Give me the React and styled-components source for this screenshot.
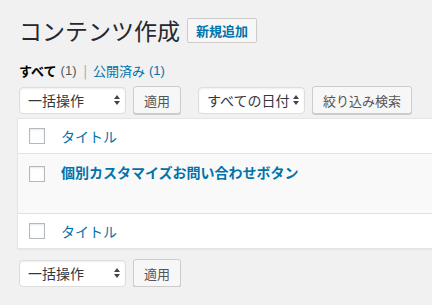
import React from "react";
import styled, { createGlobalStyle } from "styled-components";

const GlobalStyle = createGlobalStyle`
  html, body {
    margin: 0;
    padding: 0;
    background: #f1f1f1;
    overflow: hidden;
  }
  body {
    font-family: "Noto Sans CJK JP", "Liberation Sans", sans-serif;
    color: #444;
  }
`;

const Wrap = styled.div`
  width: 520px;
  padding: 16px 0 0 17px;
`;

const Header = styled.div`
  display: flex;
  align-items: center;
  gap: 7px;
  height: 29px;
  padding-left: 2px;
`;

const Title = styled.h1`
  margin: 0;
  font-size: 23px;
  font-weight: 400;
  line-height: 29px;
  color: #23282d;
`;

const AddNew = styled.a`
  display: inline-flex;
  align-items: center;
  box-sizing: border-box;
  height: 25px;
  padding: 0 8px;
  border: 1px solid #ccc;
  border-radius: 2px;
  background: #f7f7f7;
  color: #0073aa;
  font-size: 13px;
  font-weight: 700;
  text-decoration: none;
`;

const Views = styled.div`
  display: flex;
  align-items: center;
  margin-top: 15px;
  padding-left: 2px;
  height: 20px;
  font-size: 13px;
  color: #555;
`;

const ViewLink = styled.span`
  color: ${(p) => (p.$current ? "#000" : "#0073aa")};
  font-weight: ${(p) => (p.$current ? 700 : 400)};
`;

const Count = styled.span`
  color: ${(p) => (p.$link ? "#0073aa" : "#555")};
  margin-left: 4px;
  font-family: "Liberation Sans", sans-serif;
`;

const Sep = styled.span`
  color: #8aa4b8;
  margin: 0 6px 0 7px;
`;

const TableNav = styled.div`
  display: flex;
  align-items: center;
  height: 28px;
  padding-left: 2px;
  margin-top: ${(p) => p.$top}px;
`;

const Select = styled.div`
  display: flex;
  align-items: center;
  justify-content: space-between;
  box-sizing: border-box;
  width: 107px;
  height: 27px;
  padding: 0 5px 0 8px;
  border: 1px solid #ddd;
  border-radius: 4px;
  background: #fff;
  box-shadow: inset 0 1px 2px rgba(0, 0, 0, 0.07);
  font-size: 14px;
  color: #32373c;
`;

const Button = styled.div`
  display: inline-flex;
  align-items: center;
  box-sizing: border-box;
  height: 28px;
  margin-left: ${(p) => p.$gap}px;
  padding: 0 10px;
  border: 1px solid #ccc;
  border-radius: 3px;
  background: #f7f7f7;
  box-shadow: 0 1px 0 #ccc;
  font-size: 13px;
  color: #555;
`;

const Spacer = styled.div`
  width: ${(p) => p.$w}px;
`;

const Table = styled.div`
  margin-top: 4px;
  border: 1px solid #e5e5e5;
  background: #fff;
  box-shadow: 0 1px 1px rgba(0, 0, 0, 0.04);
`;

const Row = styled.div`
  display: flex;
  align-items: ${(p) => (p.$tall ? "flex-start" : "center")};
  box-sizing: border-box;
  height: ${(p) => p.$h}px;
  padding-top: ${(p) => (p.$tall ? 9 : 0)}px;
  background: ${(p) => (p.$alt ? "#f9f9f9" : "#fff")};
  border-bottom: ${(p) => (p.$line ? "1px solid #e1e1e1" : "none")};
`;

const CheckCell = styled.div`
  display: flex;
  width: 43px;
  padding-left: 11px;
  box-sizing: border-box;
  padding-top: ${(p) => (p.$tall ? 3 : 0)}px;
`;

const Checkbox = styled.span`
  display: block;
  box-sizing: border-box;
  width: 16px;
  height: 16px;
  border: 1px solid #b4b9be;
  background: #fff;
  box-shadow: inset 0 1px 2px rgba(0, 0, 0, 0.1);
`;

const ColLink = styled.a`
  color: #0073aa;
  font-size: 14px;
  line-height: 19px;
  font-weight: ${(p) => (p.$bold ? 700 : 400)};
  text-decoration: none;
`;

const Arrows = () => (
  <svg width="6" height="10" viewBox="0 0 6 10">
    <path d="M3 0 L6 4 L0 4 Z" fill="#444" />
    <path d="M0 6 L6 6 L3 10 Z" fill="#444" />
  </svg>
);

const BulkNav = ({ top }) => (
  <TableNav $top={top}>
    <Select>
      一括操作
      <Arrows />
    </Select>
    <Button $gap={7}>適用</Button>
  </TableNav>
);

export default function App() {
  return (
    <>
      <GlobalStyle />
      <Wrap>
        <Header>
          <Title>コンテンツ作成</Title>
          <AddNew>新規追加</AddNew>
        </Header>

        <Views>
          <ViewLink $current>すべて</ViewLink>
          <Count>(1)</Count>
          <Sep>|</Sep>
          <ViewLink>公開済み</ViewLink>
          <Count $link>(1)</Count>
        </Views>

        <TableNav $top={6}>
          <Select>
            一括操作
            <Arrows />
          </Select>
          <Button $gap={7}>適用</Button>
          <Spacer $w={17} />
          <Select>
            すべての日付
            <Arrows />
          </Select>
          <Button $gap={7}>絞り込み検索</Button>
        </TableNav>

        <Table>
          <Row $h={35} $line>
            <CheckCell>
              <Checkbox />
            </CheckCell>
            <ColLink>タイトル</ColLink>
          </Row>
          <Row $h={60} $alt $line $tall>
            <CheckCell $tall>
              <Checkbox />
            </CheckCell>
            <ColLink $bold>個別カスタマイズお問い合わせボタン</ColLink>
          </Row>
          <Row $h={34}>
            <CheckCell>
              <Checkbox />
            </CheckCell>
            <ColLink>タイトル</ColLink>
          </Row>
        </Table>

        <BulkNav top={10} />
      </Wrap>
    </>
  );
}
